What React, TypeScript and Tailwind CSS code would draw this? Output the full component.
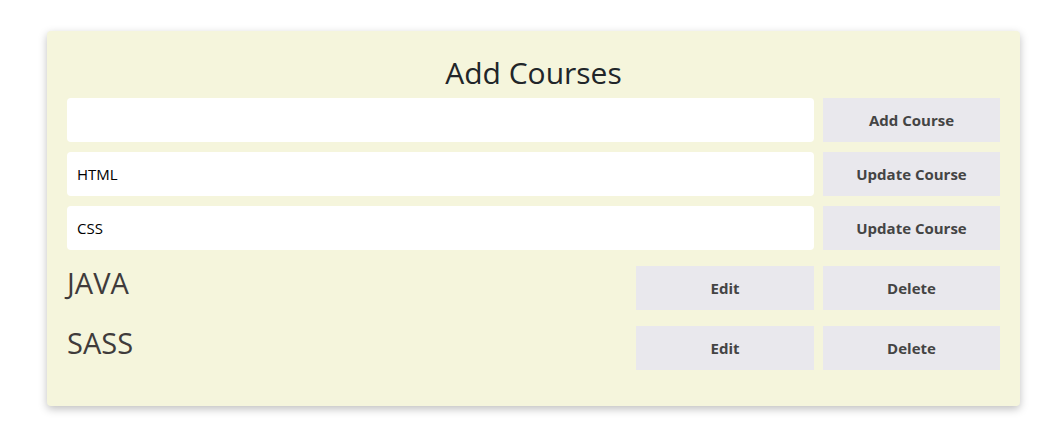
export default function App() {
  const font = { fontFamily: '"Segoe UI", "Open Sans", "Noto Sans", sans-serif' };
  return (
    <div className="w-[1064px] h-[442px] bg-white pt-[31px] pl-[47px]" style={font}>
      <div className="w-[973px] h-[375px] bg-[#f5f5dc] rounded-[4px] shadow-[0_3px_8px_rgba(0,0,0,0.25)] px-[20px] pt-[37px]">
        <h1 className="text-center text-[30px] leading-none text-[#212529] font-normal -mt-[6px] mb-0 h-[21px] flex items-center justify-center">
          Add Courses
        </h1>
        <div className="mt-[15px] flex flex-col gap-[10px]">
          {["", "HTML", "CSS"].map((v, i) => (
            <div key={i} className="flex gap-[9px] h-[44px]">
              <div className="flex-1 bg-white rounded-[4px] flex items-center px-[10px] text-[15px] text-black">
                {v}
              </div>
              <button className="w-[177px] bg-[#e9e8ed] text-[#444] font-bold text-[15px]">
                {i === 0 ? "Add Course" : "Update Course"}
              </button>
            </div>
          ))}
        </div>
        <div className="mt-[16px] flex flex-col gap-[16px]">
          {["JAVA", "SASS"].map((c) => (
            <div key={c} className="flex h-[44px] items-center">
              <div className="flex-1 text-[29px] text-[#3f3b3b] leading-none -mt-[11px]">{c}</div>
              <div className="flex gap-[9px] h-full">
                <button className="w-[178px] bg-[#e9e8ed] text-[#444] font-bold text-[15px]">Edit</button>
                <button className="w-[177px] bg-[#e9e8ed] text-[#444] font-bold text-[15px]">Delete</button>
              </div>
            </div>
          ))}
        </div>
      </div>
    </div>
  );
}
